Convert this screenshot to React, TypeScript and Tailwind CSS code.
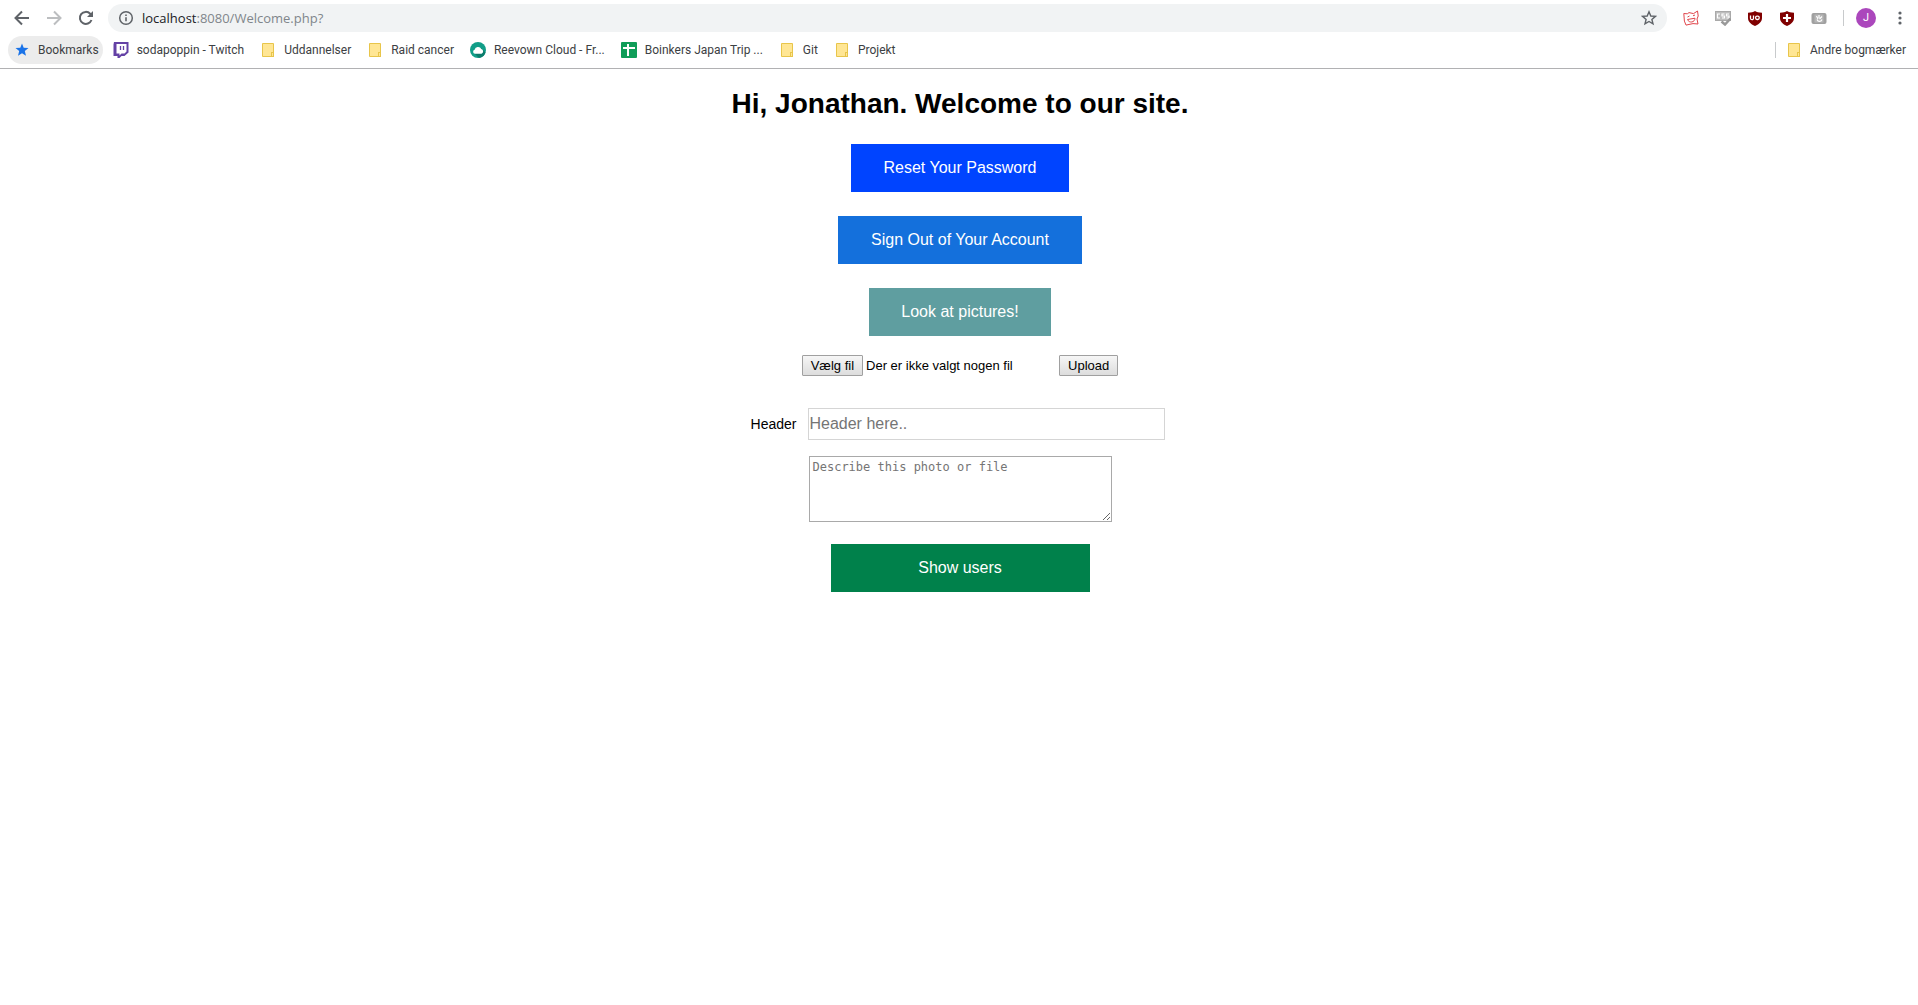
import type { ReactNode } from "react";

function FolderIcon() {
  return (
    <svg width="16" height="16" viewBox="0 0 16 16" aria-hidden="true">
      <path d="M2.500 1.500h11v9.500v3.500h-11z" fill="#ffe694" stroke="#e8c54a" />
      <rect x="11.500" y="10.500" width="2" height="4" fill="#ffe694" stroke="#e8c54a" />
    </svg>
  );
}

function TwitchIcon() {
  return (
    <svg width="16" height="16" viewBox="0 0 16 16" aria-hidden="true">
      <path d="M1 0h14.500v10.500L11.500 14H8.500L6.500 16H4.500V14H0.500V2.500z" fill="#6441a5" />
      <path d="M3.500 2h10v7.500L11.500 11.500H8.500L6.500 13.500V11.500H3.500z" fill="#fff" />
      <path d="M7.500 4v4M10.500 4v4" stroke="#6441a5" strokeWidth="1.300" />
    </svg>
  );
}

function CloudIcon() {
  return (
    <svg width="16" height="16" viewBox="0 0 16 16" aria-hidden="true">
      <circle cx="8" cy="8" r="8" fill="#119e88" />
      <path d="M11 6l4.500 4.500A8 8 0 0 1 9 15.900L5 12z" fill="#0b7c6b" />
      <path d="M5 11.800a2.100 2.100 0 0 1-.4-4.100 3.600 3.600 0 0 1 6.700-.8 2.600 2.600 0 0 1 .2 4.900z" fill="#fff" />
    </svg>
  );
}

function SheetsIcon() {
  return (
    <svg width="16" height="16" viewBox="0 0 16 16" aria-hidden="true">
      <rect width="16" height="16" rx="1" fill="#0f9d58" />
      <path d="M2 6h12M7 2v12" stroke="#fff" strokeWidth="2" />
    </svg>
  );
}

function StarIcon() {
  return (
    <svg width="16" height="16" viewBox="0 0 16 16" aria-hidden="true">
      <path d="M8 1.500l1.700 4.300 4.800.3-3.700 3 1.200 4.700L8 11.200l-4 2.600 1.200-4.700-3.700-3 4.800-.3z" fill="#1a73e8" />
    </svg>
  );
}

function Bookmark({ icon, children }: { icon: ReactNode; children: ReactNode }) {
  return (
    <a href="#" className="flex h-7 shrink-0 items-center gap-2 whitespace-nowrap">
      {icon}
      <span>{children}</span>
    </a>
  );
}

const shield = "M8 1C6.500 2 4 2.700 1 2.800V8c0 3.500 2.500 6 7 8 4.500-2 7-4.500 7-8V2.800C12 2.700 9.500 2 8 1z";

function Extensions() {
  return (
    <div className="flex items-center gap-4">
      <button aria-label="Cat extension">
        <svg width="16" height="16" viewBox="0 0 16 16" fill="none" stroke="#e0454b">
          <path d="M.8 3.500l3.500.3L6 2.600l4.500 1L14.500 1l.7 5-1.200 3 1 5-5-.4-7 1.500-1.600-4z" />
          <path d="M4.500 7l2-1M10 5.800l2-.8M4.500 9.500l7.500-1.300c0 4.300-6 5.300-7.500 1.300z" />
        </svg>
      </button>
      <button aria-label="CSS extension">
        <svg width="16" height="16" viewBox="0 0 16 16">
          <rect x=".5" y="1.500" width="15" height="9" fill="#bdbdbd" stroke="#a9a9a9" />
          <path d="M5 4H2.500v4H5M9.500 4H7v2h2.500v2H7M14 4h-2.500v2H14v2h-2.500" fill="none" stroke="#fff" strokeWidth="1.200" />
          <path d="M6.500 11.500l3.500 3 5.500-6" fill="none" stroke="#999" strokeWidth="2.500" />
        </svg>
      </button>
      <button aria-label="Origin shield">
        <svg width="16" height="16" viewBox="0 0 16 16">
          <path d={shield} fill="#800000" />
          <path d="M3.500 5.500v2.700a1.500 1.500 0 0 0 3 0v-2.700" fill="none" stroke="#fff" strokeWidth="1.300" />
          <rect x="8.600" y="6.100" width="3.600" height="3.400" rx="1.400" fill="none" stroke="#fff" strokeWidth="1.300" />
        </svg>
      </button>
      <button aria-label="Plus shield">
        <svg width="16" height="16" viewBox="0 0 16 16">
          <path d={shield} fill="#800000" />
          <path d="M4 8h8M8 4v8" stroke="#fff" strokeWidth="2.200" />
        </svg>
      </button>
      <button aria-label="Inactive extension">
        <svg width="16" height="16" viewBox="0 0 16 16">
          <rect x=".5" y="3" width="15" height="11" rx="2" fill="#a0a0a0" />
          <rect x="3.500" y="4.500" width="9" height="8" fill="#b5b5b5" />
          <path d="M5.500 6l1.500 3M8 5v3M11 6.500L8.500 9M6 9.500c1 2.500 4 2.500 5 0" fill="none" stroke="#fff" strokeWidth="1.200" />
        </svg>
      </button>
    </div>
  );
}

function BrowserChrome() {
  return (
    <header className="border-b border-[#b1b1b3] bg-white">
      <div className="flex h-9 items-center pr-3.5 pl-3">
        <nav className="flex shrink-0 items-center gap-3 pr-3" aria-label="History">
          <button aria-label="Back">
            <svg width="20" height="20" viewBox="0 0 20 20" fill="none" stroke="#5f6368" strokeWidth="2">
              <path d="M17 10H4M10 3.500L3.500 10l6.500 6.500" />
            </svg>
          </button>
          <button aria-label="Forward">
            <svg width="20" height="20" viewBox="0 0 20 20" fill="none" stroke="#bcbec0" strokeWidth="2">
              <path d="M3 10h13M10 3.500l6.500 6.500-6.500 6.500" />
            </svg>
          </button>
          <button aria-label="Reload">
            <svg width="20" height="20" viewBox="0 0 20 20">
              <path d="M15.500 12a6 6 0 1 1-1.300-6.300L16 7.500" fill="none" stroke="#5f6368" strokeWidth="2" />
              <path d="M17 3v6h-6z" fill="#5f6368" />
            </svg>
          </button>
        </nav>
        <div className="flex h-7 min-w-0 flex-1 items-center gap-2 rounded-full bg-[#f1f3f4] px-2.5">
          <svg width="16" height="16" viewBox="0 0 16 16" fill="none" stroke="#5f6368" className="shrink-0">
            <circle cx="8" cy="8" r="6.300" strokeWidth="1.500" />
            <path d="M8 7.200v4M8 4.400v1.600" strokeWidth="1.600" />
          </svg>
          <div className="min-w-0 flex-1 truncate font-['Open_Sans','Noto_Sans',sans-serif] text-[13px] leading-7 text-[#80868b]">
            <span className="text-[#202124]">localhost</span>:8080/Welcome.php?
          </div>
          <button aria-label="Bookmark this page">
            <svg width="16" height="16" viewBox="0 0 16 16" fill="none" stroke="#5f6368" strokeWidth="1.400">
              <path d="M8 1.800l1.800 4.200 4.600.4-3.500 3 1.100 4.500L8 11.500l-4 2.400 1.100-4.500-3.500-3 4.600-.4z" />
            </svg>
          </button>
        </div>
        <div className="flex shrink-0 items-center gap-4 pl-4">
          <Extensions />
          <span className="h-4 w-px bg-[#c8cacc]" />
          <button className="-ml-1 size-5 rounded-full bg-[#ab47bc] font-[Roboto,sans-serif] text-[11px] leading-5 text-white" aria-label="Profile J">
            J
          </button>
          <button aria-label="Menu" className="-mr-1">
            <svg width="16" height="16" viewBox="0 0 16 16" fill="#5f6368">
              <circle cx="8" cy="3" r="1.600" />
              <circle cx="8" cy="8" r="1.600" />
              <circle cx="8" cy="13" r="1.600" />
            </svg>
          </button>
        </div>
      </div>
      <nav className="flex h-8 items-start pr-3 pl-2 font-[Roboto,'Noto_Sans',sans-serif] text-xs text-[#3c4043]" aria-label="Bookmarks bar">
        <div className="mr-2.5 rounded-full bg-[#ececec] pr-1 pl-1.5">
          <Bookmark icon={<StarIcon />}>Bookmarks</Bookmark>
        </div>
        <div className="flex gap-4">
          <Bookmark icon={<TwitchIcon />}>sodapoppin - Twitch</Bookmark>
          <Bookmark icon={<FolderIcon />}>Uddannelser</Bookmark>
          <Bookmark icon={<FolderIcon />}>Raid cancer</Bookmark>
          <Bookmark icon={<CloudIcon />}>Reevown Cloud - Fr...</Bookmark>
          <Bookmark icon={<SheetsIcon />}>Boinkers Japan Trip ...</Bookmark>
          <Bookmark icon={<FolderIcon />}>Git</Bookmark>
          <Bookmark icon={<FolderIcon />}>Projekt</Bookmark>
        </div>
        <div className="ml-auto flex items-center gap-2.5">
          <span className="h-4 w-px bg-[#c8cacc]" />
          <Bookmark icon={<FolderIcon />}>Andre bogmærker</Bookmark>
        </div>
      </nav>
    </header>
  );
}

const smallButton =
  "h-[21px] rounded-[1px] border border-[#a0a0a0] bg-linear-to-b from-[#f6f6f6] to-[#dddddd] px-2 text-[13px] leading-[19px]";

export default function App() {
  return (
    <div className="min-h-screen bg-white text-black">
      <BrowserChrome />
      <main className="flex flex-col items-center pt-[19px] pl-0.5 font-['Liberation_Sans',Arial,sans-serif]">
        <h1 className="text-[28px] leading-8 font-bold">Hi, Jonathan. Welcome to our site.</h1>
        <div className="mt-6 flex flex-col items-center gap-6 text-center text-base leading-[18px] text-white">
          <a href="#" className="bg-[#0044ff] px-[33px] py-[15px]">Reset Your Password</a>
          <a href="#" className="bg-[#1470dc] px-[33px] py-[15px]">Sign Out of Your Account</a>
          <a href="#" className="bg-[#5f9ea0] px-8 py-[15px]">Look at pictures!</a>
        </div>
        <form className="mt-[19px] flex flex-col items-center" onSubmit={(e) => e.preventDefault()}>
          <div className="flex items-center text-[13px]">
            <input id="file" type="file" className="sr-only" />
            <label htmlFor="file" className={smallButton}>Vælg fil</label>
            <span className="w-[196px] pl-[3px]">Der er ikke valgt nogen fil</span>
            <button type="submit" className={smallButton}>Upload</button>
          </div>
          <div className="mt-8 mr-1 flex items-center gap-3">
            <label htmlFor="header" className="text-sm">Header</label>
            <input
              id="header"
              type="text"
              placeholder="Header here.."
              className="h-8 w-[357px] border border-[#d5d5d5] text-base placeholder:text-[#757575]"
            />
          </div>
          <textarea
            aria-label="Description"
            placeholder="Describe this photo or file"
            className="mt-4 ml-0.5 block h-[66px] w-[303px] resize border border-[#a9a9a9] p-0.5 font-['DejaVu_Sans_Mono',monospace] text-xs placeholder:text-[#757575]"
          />
        </form>
        <button className="mt-[22px] h-12 w-[259px] bg-[#00814b] text-base text-white">Show users</button>
      </main>
    </div>
  );
}
